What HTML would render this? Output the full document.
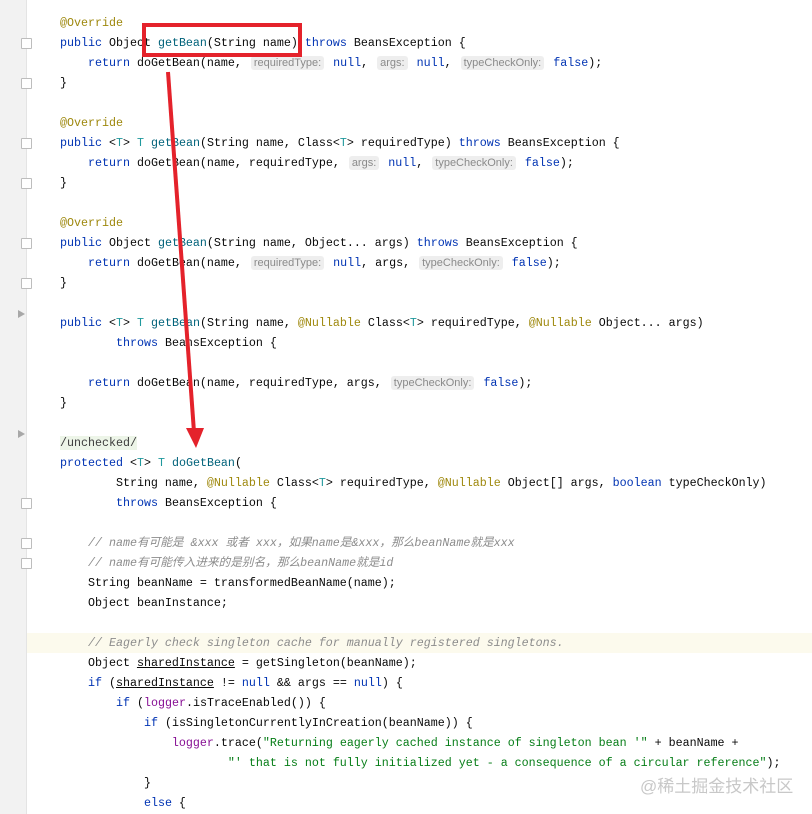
<!DOCTYPE html>
<html><head><meta charset="utf-8"><style>
body{margin:0;width:812px;height:814px;background:#fff;overflow:hidden;position:relative;font-family:"Liberation Mono","Noto Sans CJK SC",monospace;font-size:11.67px;color:#080808}
.g{position:absolute;left:0;top:0;width:26px;height:814px;background:#f2f2f2;border-right:1px solid #e4e4e4}
.l{position:absolute;left:60px;height:20px;line-height:20px;white-space:pre}
.k{color:#0033b3}.a{color:#9e880d}.m{color:#00627a}.s{color:#067d17}.c{color:#8c8c8c;font-style:italic}.f{color:#871094}.t{color:#20999d}
.h{font-family:"Liberation Sans",sans-serif;font-size:11px;color:#8a8a8a;background:#eeeeee;border-radius:3px;padding:1px 3px;margin:0 2px}
.fold{position:absolute;left:21px;width:9px;height:9px;border:1px solid #bdbdbd;background:#fff;border-radius:1px}
.tri{position:absolute;left:18px;width:0;height:0;border-left:7px solid #a8a8a8;border-top:4px solid transparent;border-bottom:4px solid transparent}
</style></head><body>
<div class="g"></div>
<div class="fold" style="top:38px"></div><div class="fold" style="top:78px"></div>
<div class="fold" style="top:138px"></div><div class="fold" style="top:178px"></div>
<div class="fold" style="top:238px"></div><div class="fold" style="top:278px"></div>
<div class="tri" style="top:310px"></div><div class="tri" style="top:430px"></div>
<div class="fold" style="top:498px"></div><div class="fold" style="top:538px"></div><div class="fold" style="top:558px"></div>
<div style="position:absolute;left:27px;top:633px;width:785px;height:20px;background:#fcfaed"></div>
<div class="l" style="top:13px"><span class="a">@Override</span></div>
<div class="l" style="top:33px"><span class="k">public</span> Object <span class="m">getBean</span>(String name) <span class="k">throws</span> BeansException {</div>
<div class="l" style="top:53px">    <span class="k">return</span> doGetBean(name, <span class="h">requiredType:</span> <span class="k">null</span>, <span class="h">args:</span> <span class="k">null</span>, <span class="h">typeCheckOnly:</span> <span class="k">false</span>);</div>
<div class="l" style="top:73px">}</div>
<div class="l" style="top:113px"><span class="a">@Override</span></div>
<div class="l" style="top:133px"><span class="k">public</span> &lt;<span class="t">T</span>&gt; <span class="t">T</span> <span class="m">getBean</span>(String name, Class&lt;<span class="t">T</span>&gt; requiredType) <span class="k">throws</span> BeansException {</div>
<div class="l" style="top:153px">    <span class="k">return</span> doGetBean(name, requiredType, <span class="h">args:</span> <span class="k">null</span>, <span class="h">typeCheckOnly:</span> <span class="k">false</span>);</div>
<div class="l" style="top:173px">}</div>
<div class="l" style="top:213px"><span class="a">@Override</span></div>
<div class="l" style="top:233px"><span class="k">public</span> Object <span class="m">getBean</span>(String name, Object... args) <span class="k">throws</span> BeansException {</div>
<div class="l" style="top:253px">    <span class="k">return</span> doGetBean(name, <span class="h">requiredType:</span> <span class="k">null</span>, args, <span class="h">typeCheckOnly:</span> <span class="k">false</span>);</div>
<div class="l" style="top:273px">}</div>
<div class="l" style="top:313px"><span class="k">public</span> &lt;<span class="t">T</span>&gt; <span class="t">T</span> <span class="m">getBean</span>(String name, <span class="a">@Nullable</span> Class&lt;<span class="t">T</span>&gt; requiredType, <span class="a">@Nullable</span> Object... args)</div>
<div class="l" style="top:333px">        <span class="k">throws</span> BeansException {</div>
<div class="l" style="top:373px">    <span class="k">return</span> doGetBean(name, requiredType, args, <span class="h">typeCheckOnly:</span> <span class="k">false</span>);</div>
<div class="l" style="top:393px">}</div>
<div class="l" style="top:433px"><span style="background:#edf5e8;color:#3d3d3d">/unchecked/</span></div>
<div class="l" style="top:453px"><span class="k">protected</span> &lt;<span class="t">T</span>&gt; <span class="t">T</span> <span class="m">doGetBean</span>(</div>
<div class="l" style="top:473px">        String name, <span class="a">@Nullable</span> Class&lt;<span class="t">T</span>&gt; requiredType, <span class="a">@Nullable</span> Object[] args, <span class="k">boolean</span> typeCheckOnly)</div>
<div class="l" style="top:493px">        <span class="k">throws</span> BeansException {</div>
<div class="l" style="top:533px">    <span class="c">// name有可能是 &amp;xxx 或者 xxx，如果name是&amp;xxx，那么beanName就是xxx</span></div>
<div class="l" style="top:553px">    <span class="c">// name有可能传入进来的是别名，那么beanName就是id</span></div>
<div class="l" style="top:573px">    String beanName = transformedBeanName(name);</div>
<div class="l" style="top:593px">    Object beanInstance;</div>
<div class="l" style="top:633px">    <span class="c">// Eagerly check singleton cache for manually registered singletons.</span></div>
<div class="l" style="top:653px">    Object <span style="text-decoration:underline">sharedInstance</span> = getSingleton(beanName);</div>
<div class="l" style="top:673px">    <span class="k">if</span> (<span style="text-decoration:underline">sharedInstance</span> != <span class="k">null</span> &amp;&amp; args == <span class="k">null</span>) {</div>
<div class="l" style="top:693px">        <span class="k">if</span> (<span class="f">logger</span>.isTraceEnabled()) {</div>
<div class="l" style="top:713px">            <span class="k">if</span> (isSingletonCurrentlyInCreation(beanName)) {</div>
<div class="l" style="top:733px">                <span class="f">logger</span>.trace(<span class="s">"Returning eagerly cached instance of singleton bean '"</span> + beanName +</div>
<div class="l" style="top:753px">                        <span class="s">"' that is not fully initialized yet - a consequence of a circular reference"</span>);</div>
<div class="l" style="top:773px">            }</div>
<div class="l" style="top:793px">            <span class="k">else</span> {</div>
<div style="position:absolute;left:640px;top:772px;font-family:'Liberation Sans','Noto Sans CJK SC',sans-serif;font-size:17px;color:#c8c8c8">@稀土掘金技术社区</div>
<svg style="position:absolute;left:0;top:0" width="812" height="814">
<rect x="144" y="25" width="156" height="30" fill="none" stroke="#e4222b" stroke-width="4"/>
<line x1="168" y1="72" x2="194" y2="432" stroke="#e4222b" stroke-width="4"/>
<polygon points="186,428 204,428 196,448" fill="#e4222b"/>
</svg>
</body></html>
